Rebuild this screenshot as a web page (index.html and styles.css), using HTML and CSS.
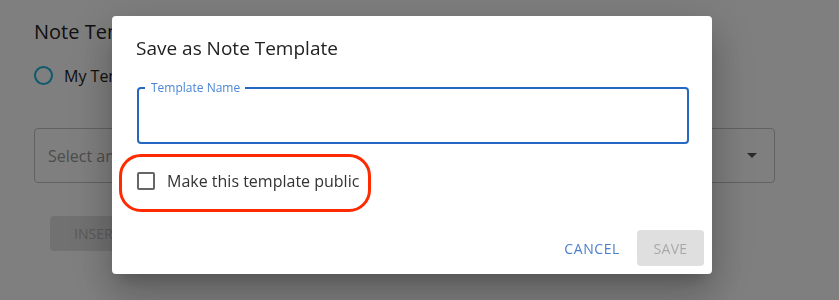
FILE: index.html
```html
<!DOCTYPE html>
<html>
<head>
<meta charset="utf-8">
<link rel="stylesheet" href="styles.css">
</head>
<body>
<div class="page">
  <h2 class="page-title">Note Templates</h2>
  <div class="radio-row">
    <span class="radio"></span><span class="radio-label">My Templates</span>
  </div>
  <div class="select">
    <span class="select-ph">Select an existing template</span>
    <span class="select-arrow"></span>
  </div>
  <button class="insert">INSERT</button>
</div>
<div class="overlay"></div>
<div class="dialog">
  <h2 class="dialog-title">Save as Note Template</h2>
  <div class="dialog-content">
    <div class="field">
      <span class="field-label">Template Name</span>
    </div>
    <label class="check-row">
      <span class="checkbox"></span>
      <span class="check-label">Make this template public</span>
    </label>
  </div>
  <div class="dialog-actions">
    <button class="btn-cancel">CANCEL</button>
    <button class="btn-save">SAVE</button>
  </div>
  <div class="annotation"></div>
</div>
</body>
</html>
```

FILE: styles.css
```css
* { box-sizing: border-box; }
html, body { margin: 0; padding: 0; }
body {
  width: 839px;
  height: 300px;
  overflow: hidden;
  background: #ffffff;
  font-family: "Open Sans", "Lato", sans-serif;
  color: #222;
}
.page {
  padding: 18px 64px 0 34px;
  display: flex;
  flex-direction: column;
}
.page-title {
  margin: 0;
  font-weight: 400;
  font-size: 20px;
  line-height: 28px;
  color: #222;
}
.radio-row {
  display: flex;
  align-items: center;
  gap: 11px;
  margin-top: 20px;
  height: 19px;
}
.radio {
  width: 19px;
  height: 19px;
  border: 2px solid #1ab4da;
  border-radius: 50%;
}
.radio-label { font-size: 16px; color: #222; }
.select {
  margin-top: 43px;
  height: 55px;
  border: 1px solid #c4c4c4;
  border-radius: 4px;
  display: flex;
  align-items: center;
  justify-content: space-between;
  padding: 0 17px 0 13px;
}
.select-ph { font-size: 16px; color: #9a9a9a; }
.select-arrow {
  width: 0; height: 0;
  border-left: 5px solid transparent;
  border-right: 5px solid transparent;
  border-top: 5px solid #555;
}
.insert {
  margin: 33px 0 0 16px;
  align-self: flex-start;
  height: 35px;
  width: 110px;
  border: 0;
  border-radius: 4px;
  background: #e3e3e3;
  color: #b5b5b5;
  font-family: inherit;
  font-size: 14px;
  text-align: left;
  padding-left: 24px;
}
.overlay {
  position: fixed;
  inset: 0;
  background: rgba(0,0,0,0.5);
}
.dialog {
  position: fixed;
  left: 112px;
  top: 16px;
  width: 600px;
  height: 258px;
  background: #fff;
  border-radius: 4px;
  box-shadow: 0 11px 15px -7px rgba(0,0,0,.2), 0 24px 38px 3px rgba(0,0,0,.14), 0 9px 46px 8px rgba(0,0,0,.12);
  display: flex;
  flex-direction: column;
}
.dialog-title {
  margin: 0;
  padding: 18px 24px 0 24px;
  font-weight: 400;
  font-size: 19px;
  line-height: 28px;
  color: #222;
}
.dialog-content {
  padding: 25px 23px 0 25px;
  display: flex;
  flex-direction: column;
}
.field {
  height: 57px;
  width: 552px;
  border: 2px solid #2667c2;
  border-radius: 4px;
  position: relative;
}
.field-label {
  position: absolute;
  left: 6px;
  top: -9px;
  padding: 0 5px 0 6px;
  background: #fff;
  font-size: 12px;
  line-height: 15px;
  color: #4a86d4;
}
.check-row {
  display: flex;
  align-items: center;
  gap: 12px;
  margin-top: 28px;
  height: 18px;
}
.checkbox {
  width: 18px;
  height: 18px;
  border: 2px solid #666;
  border-radius: 2px;
}
.check-label { font-size: 16px; color: #333; }
.dialog-actions {
  margin-top: auto;
  display: flex;
  justify-content: flex-end;
  align-items: center;
  gap: 9px;
  padding: 8px;
}
.btn-cancel, .btn-save {
  font-family: inherit;
  font-size: 14px;
  height: 36px;
  border: 0;
  border-radius: 4px;
  padding: 0 16px;
  letter-spacing: 0.3px;
}
.btn-cancel { background: transparent; color: #4a7fcc; padding: 0 8px; letter-spacing: 0.6px; }
.btn-save { background: #dfdfdf; color: #a8a8a8; width: 67px; }
.annotation {
  position: absolute;
  left: 7px;
  top: 138px;
  width: 252px;
  height: 58px;
  border: 3px solid #ff2a00;
  border-radius: 22px;
}
```
